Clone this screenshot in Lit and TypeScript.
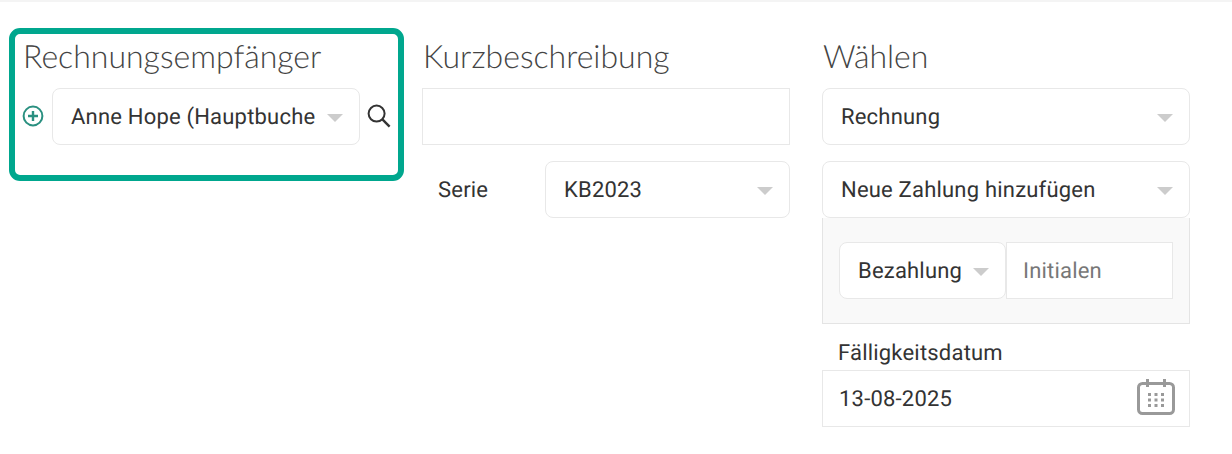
import { LitElement, html, css, svg, type TemplateResult } from "lit";
import { customElement } from "lit/decorators.js";

const caret = html`<span class="caret"></span>`;

function select(label: string): TemplateResult {
  return html`<div class="select"><span class="value">${label}</span>${caret}</div>`;
}

const plusIcon = svg`<circle cx="11" cy="11" r="9.4" fill="none" stroke="#2a9080" stroke-width="2"/><path d="M11 6v10M6 11h10" stroke="#2a9080" stroke-width="2.4" fill="none"/>`;
const searchIcon = svg`<circle cx="9.6" cy="9.6" r="8" fill="none" stroke="#333" stroke-width="2"/><path d="M15.4 15.4l7.2 7.2" stroke="#333" stroke-width="2.4" fill="none"/>`;
const calendarIcon = svg`<rect x="1.5" y="4.5" width="35" height="30" rx="4" fill="none" stroke="#999" stroke-width="3"/>
  <path d="M10.5 0v8M27.5 0v8" stroke="#999" stroke-width="3" fill="none"/>
  <path d="M11 14h3v3h-3zM17.5 14h3v3h-3zM24 14h3v3h-3zM11 19.5h3v3h-3zM17.5 19.5h3v3h-3zM24 19.5h3v3h-3zM11 25h3v3h-3zM17.5 25h3v3h-3zM24 25h3v3h-3z" fill="#999"/>`;

@customElement("app-root")
export class AppRoot extends LitElement {
  static styles = css`
    :host {
      display: block;
      width: 1232px;
      height: 454px;
      box-sizing: border-box;
      border-top: 2px solid #f4f4f4;
      background: #fff;
      font-family: Roboto, "Liberation Sans", sans-serif;
      font-size: 22px;
      letter-spacing: 0.2px;
      text-rendering: geometricPrecision;
      color: #333;
    }

    .form {
      display: grid;
      grid-template-columns: repeat(3, 368px);
      column-gap: 32px;
      padding: 36px 0 0 22px;
    }

    .col {
      position: relative;
      display: flex;
      flex-direction: column;
    }

    /* green highlight around the first column */
    .highlight {
      position: absolute;
      left: -13px;
      top: -10px;
      width: 395px;
      height: 153px;
      box-sizing: border-box;
      border: 6px solid #00a78e;
      border-radius: 11px;
      pointer-events: none;
    }

    h2 {
      margin: 0;
      height: 50px;
      padding-left: 1px;
      font-family: Lato, sans-serif;
      font-weight: 300;
      font-size: 32px;
      letter-spacing: 0;
      line-height: 36px;
      color: #444;
    }

    .select,
    .input {
      box-sizing: border-box;
      height: 57px;
      background: #fff;
      border: 1px solid #e8e8e8;
      display: flex;
      align-items: center;
      padding-top: 2px;
    }

    .select {
      border-radius: 8px;
      padding-left: 18px;
      padding-right: 19px;
      gap: 12px;
    }

    .value {
      flex: 1;
      min-width: 0;
      white-space: nowrap;
    }

    .caret {
      flex: none;
      width: 0;
      height: 0;
      border-left: 8px solid transparent;
      border-right: 8px solid transparent;
      border-top: 8px solid #ccc;
      margin-top: 1px;
      margin-right: -3px;
    }

    .input {
      padding-left: 16px;
      padding-right: 16px;
    }

    .recipient {
      display: flex;
      align-items: center;
    }

    .recipient .select {
      width: 308px;
      margin: 0 7px 0 8px;
    }

    .recipient svg {
      flex: none;
      margin-top: -2px;
    }

    .serie {
      display: flex;
      align-items: center;
      margin-top: 16px;
    }

    .serie label {
      width: 123px;
      padding: 2px 0 0 16px;
      box-sizing: border-box;
    }

    .serie .select {
      flex: 1;
    }

    .stack {
      margin-top: 16px;
    }

    .payment {
      box-sizing: border-box;
      height: 106px;
      background: #f9f9f9;
      border: 1px solid #e4e4e4;
      border-top: none;
      padding: 24px 16px 0;
      display: flex;
      align-items: flex-start;
    }

    .payment .select {
      width: 167px;
      flex: none;
      gap: 10px;
    }

    .payment .input {
      width: 167px;
      flex: none;
      color: #777;
    }

    .due-label {
      margin: 16px 0 0 16px;
      height: 30px;
      line-height: 28px;
    }

    .date {
      justify-content: space-between;
      padding-right: 14px;
    }

    .date svg {
      margin-top: -5px;
    }
  `;

  render(): TemplateResult {
    return html`
      <div class="form">
        <div class="col">
          <div class="highlight"></div>
          <h2>Rechnungsempfänger</h2>
          <div class="recipient">
            <svg width="22" height="22" viewBox="0 0 22 22">${plusIcon}</svg>
            ${select("Anne Hope (Hauptbuche")}
            <svg width="24" height="24" viewBox="0 0 24 24">${searchIcon}</svg>
          </div>
        </div>

        <div class="col">
          <h2>Kurzbeschreibung</h2>
          <div class="input"></div>
          <div class="serie">
            <label>Serie</label>
            ${select("KB2023")}
          </div>
        </div>

        <div class="col">
          <h2>Wählen</h2>
          ${select("Rechnung")}
          <div class="stack">${select("Neue Zahlung hinzufügen")}</div>
          <div class="payment">
            ${select("Bezahlung")}
            <div class="input">Initialen</div>
          </div>
          <div class="due-label">Fälligkeitsdatum</div>
          <div class="input date">
            <span>13-08-2025</span>
            <svg width="38" height="36" viewBox="0 0 38 36">${calendarIcon}</svg>
          </div>
        </div>
      </div>
    `;
  }
}

declare global {
  interface HTMLElementTagNameMap {
    "app-root": AppRoot;
  }
}
